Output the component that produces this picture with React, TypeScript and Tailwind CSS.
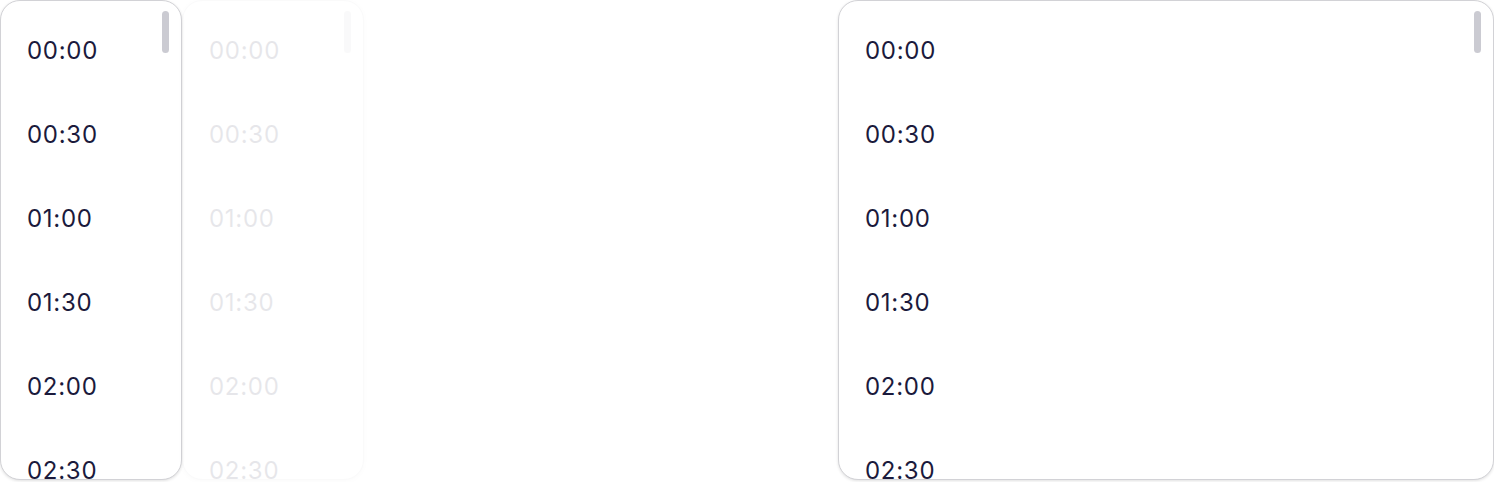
import React from "react";

const times = ["00:00", "00:30", "01:00", "01:30", "02:00", "02:30", "03:00"];

function TimeList({ className = "" }: { className?: string }) {
  return (
    <div
      className={`relative h-[480px] overflow-hidden rounded-[20px] border border-[#d2d2d6] bg-white shadow-[0_1px_3px_rgba(0,0,0,0.12)] ${className}`}
    >
      {/* scrollbar thumb */}
      <div className="absolute right-[12px] top-[10px] h-[42px] w-[7px] rounded-full bg-[#cbcbd2]" />
      <ul className="pt-2">
        {times.map((t) => (
          <li
            key={t}
            className="flex h-[84px] items-center pl-[26px] text-[24px] tracking-[0.03em] text-[#1b1a3c]"
          >
            {t}
          </li>
        ))}
      </ul>
    </div>
  );
}

export default function App() {
  return (
    <div
      className="flex h-[482px] w-[1494px] bg-white"
      style={{ fontFamily: "Inter, 'Noto Sans', sans-serif" }}
    >
      <TimeList className="w-[182px]" />
      <TimeList className="w-[182px] opacity-[0.1]" />
      <div className="flex-1" />
      <TimeList className="w-[656px]" />
    </div>
  );
}
